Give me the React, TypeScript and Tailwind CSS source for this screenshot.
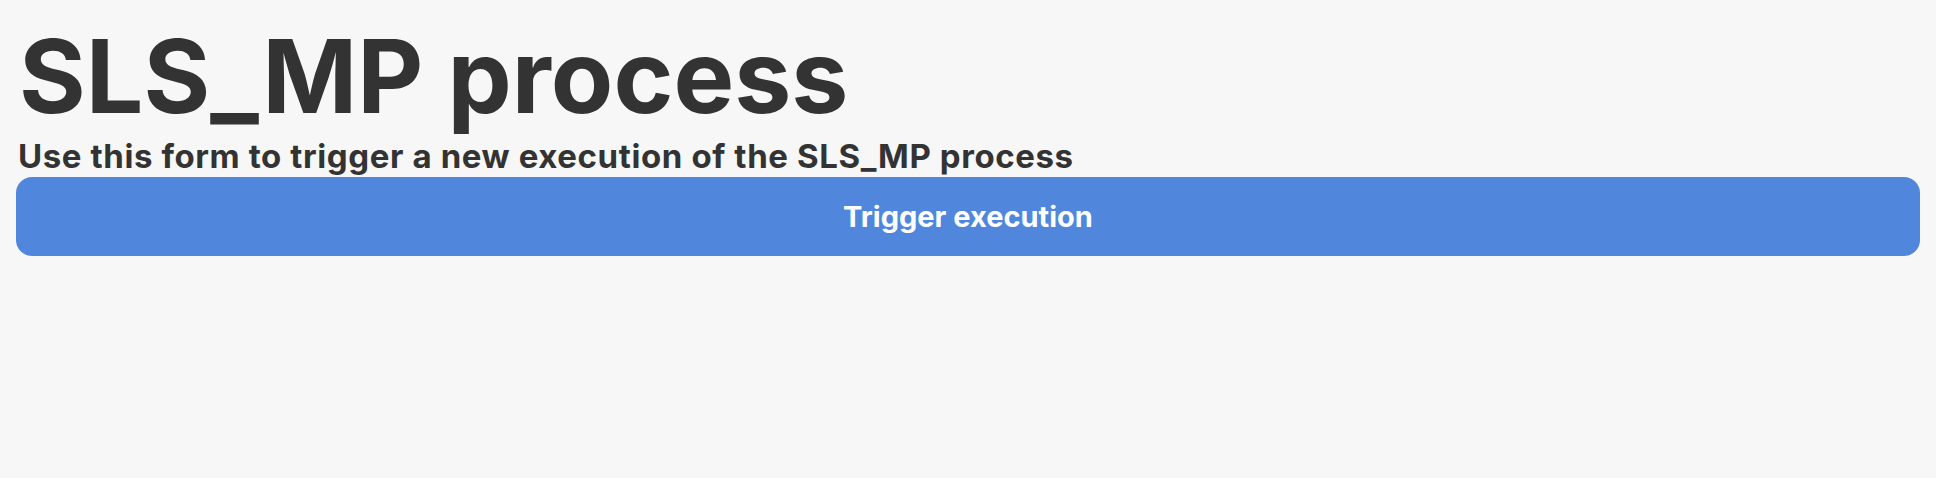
import React from 'react';

const App: React.FC = () => {
    const handleTrigger = () => {
    };

    return (
        <div className="min-h-[478px] bg-[#f7f7f7] px-4 pt-[11px] text-[#333333] font-['Inter',sans-serif]">
            <h1 className="pl-[3px] text-[102px] font-bold leading-[130px]">SLS_MP process</h1>
            <h2 className="pl-[2px] text-[33px] font-bold leading-[30px] tracking-[0.6px]">
                Use this form to trigger a new execution of the SLS_MP process
            </h2>
            <button
                onClick={handleTrigger}
                className="mt-[6px] w-full h-[79px] rounded-[16px] bg-[#5087dd] text-white text-[29px] font-bold"
            >
                Trigger execution
            </button>
        </div>
    );
};

export default App;
